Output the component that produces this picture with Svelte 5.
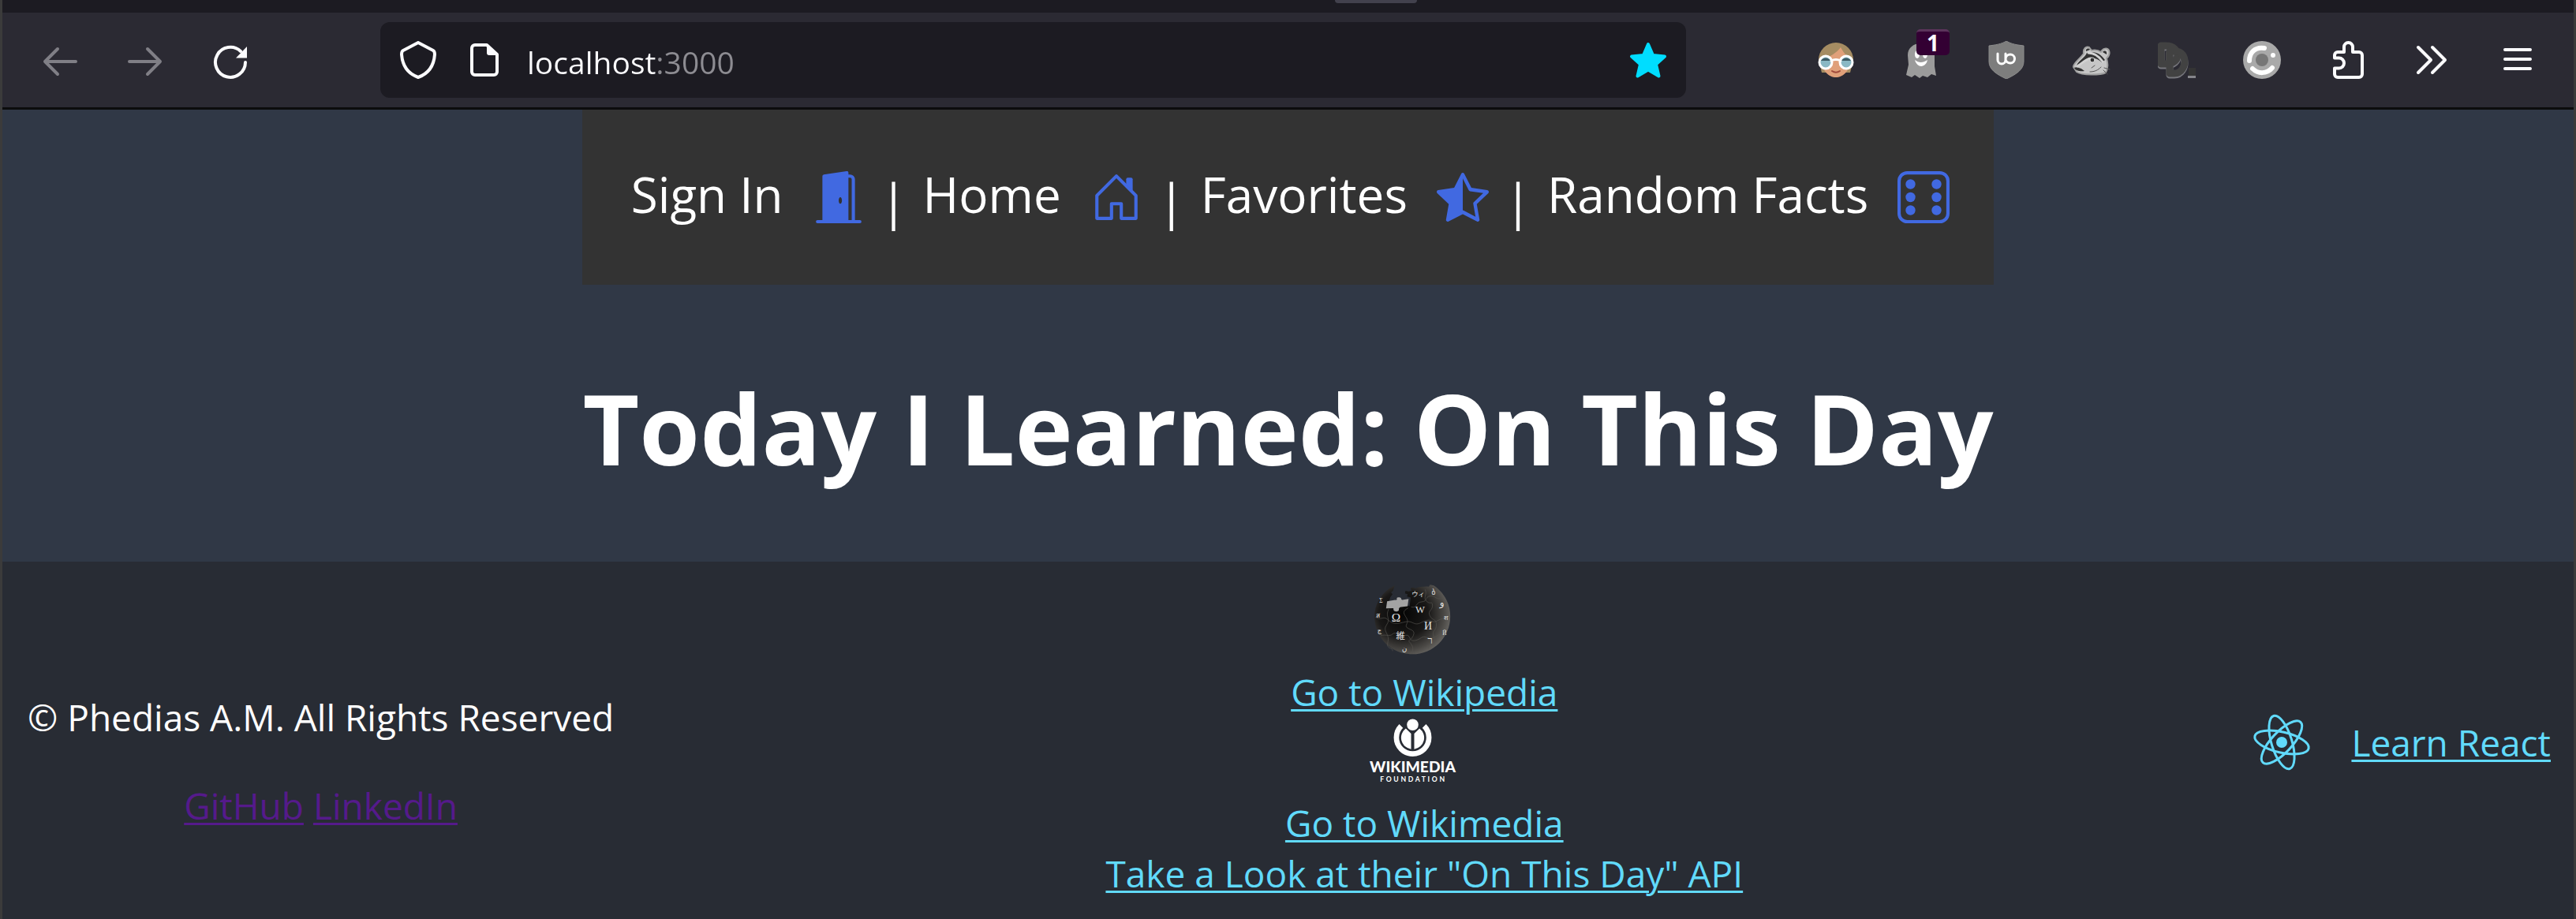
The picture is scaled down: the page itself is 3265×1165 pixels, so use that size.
<script>
  let address = $state('localhost:3000');
</script>

<div class="window">
  <div class="tabs"><span class="tab-edge"></span></div>

  <header class="toolbar">
    <div class="group">
      <button class="tool dim" aria-label="Back" disabled>
        <svg viewBox="0 0 48 48"><path d="M44 26H5M21 10L5 26l16 16" /></svg>
      </button>
      <button class="tool dim" aria-label="Forward" disabled>
        <svg viewBox="0 0 48 48"><path d="M4 26h39M27 10l16 16-16 16" /></svg>
      </button>
      <button class="tool" aria-label="Reload">
        <svg viewBox="0 0 48 48"><path d="M43 27a19 19 0 1 1-6-14" /><path class="solid" d="M45 7v14.500H31z" /></svg>
      </button>
    </div>

    <div class="address">
      <button class="tool" aria-label="Tracking protection">
        <svg viewBox="0 0 48 48"><path d="M24 2L43 12c2 1 2 3 2 5-1 14-7 24-21 29C10 41 4 31 3 17c0-2 0-4 2-5z" /></svg>
      </button>
      <button class="tool page" aria-label="Site information">
        <svg viewBox="0 0 48 48"><path d="M12 5h15l13 12v22a4 4 0 0 1-4 4H12a4 4 0 0 1-4-4V9a4 4 0 0 1 4-4z" /><path class="solid" d="M27 4l14 14H30a3 3 0 0 1-3-3z" /></svg>
      </button>
      <input type="text" aria-label="Address" bind:value={address} />
      <button class="tool" aria-label="Bookmarked">
        <svg viewBox="0 0 48 48"><path class="bookmark" d="M24 4l6 14 15 1.500-11 10 3.500 15L24 36.500 10.500 44.500l3.500-15L3 19.500 18 18z" /></svg>
      </button>
    </div>

    <div class="group">
      <button class="tool" aria-label="Profile helper">
        <svg viewBox="0 0 48 48">
          <path fill="#a58c62" stroke="none" d="M2 24a22 22 0 0 1 44 0l-4 16H6z" />
          <path fill="#e0a07a" stroke="none" d="M6 24c10-4 19-9 24-16 4 8 10 13 12 16 0 14-9 22-18 22S6 38 6 24z" />
          <g fill="#8ab8c4" stroke="#fff" stroke-width="3"><circle cx="11" cy="27" r="8" /><circle cx="37" cy="27" r="8" /></g>
          <path stroke="none" fill="#3c5a64" d="M5 25a7 7 0 0 1 12 0zM31 25a7 7 0 0 1 12 0z" />
          <path stroke="#fff" stroke-width="3" d="M18 25c4-2 8-2 12 0" />
          <path stroke="#a04a3c" stroke-width="2" d="M19 38c3 2 7 2 10 0" />
        </svg>
      </button>
      <button class="tool" aria-label="Tracker blocker, 1 found">
        <svg viewBox="0 0 48 48">
          <path fill="#9b9b9b" stroke="none" d="M7 18C7 9 14 3 24 3s17 6 17 15v14l2 12-6-2-5 4-6-2-4 3-6-4-4 3-7-3 3-13z" />
          <g fill="#fff" stroke="none"><ellipse cx="19" cy="17" rx="3" ry="5" /><ellipse cx="29" cy="17" rx="3" ry="5" /><path d="M16 24c5 4 10 4 16 0-2 10-13 11-16 0z" /></g>
        </svg>
        <span class="badge">1</span>
      </button>
      <button class="tool" aria-label="Content blocker">
        <svg viewBox="0 0 48 48">
          <path fill="#7d7d7d" stroke="#8d8d8d" stroke-width="1" d="M24 0c6 4 14 5 22 6v20c0 10-9 16-22 22C11 42 2 36 2 26V6c8-1 16-2 22-6z" />
          <path stroke="#fff" stroke-width="3" d="M13 16v8a5 5 0 0 0 10 0v-8M23 23c0-4 3-6 6-6a5.500 5.500 0 0 1 0 11c-3 0-6-2-6-5z" />
        </svg>
      </button>
      <button class="tool" aria-label="Privacy guard">
        <svg viewBox="0 0 48 48">
          <path fill="#c6c6c6" stroke="#a0a0a0" stroke-width="2" d="M1 33c-1-4 6-8 13-17-1-6 3-10 7-8l3 4c5-1 9 0 12 2 2-5 8-6 10-2 2 5-1 8-3 10 2 7 2 13-1 18-6 3-30 4-37-1z" />
          <g fill="#333" stroke="none"><path d="M18 15c9-3 17 0 23 9l-4 3C30 21 23 20 15 25L5 31c3-7 10-9 13-16z" /><path d="M17 13c-1-3 3-5 5-2zM38 14c3-3 6-1 5 3zM2 34c3-2 6 0 9 1l4 3c-5 1-11 0-13-4z" /></g>
          <path stroke="#d2d2d2" stroke-width="3" d="M20 15c8 0 13 4 18 11M6 32c7-4 10-9 17-10" />
          <circle cx="25" cy="24" r="3" fill="#333" stroke="#ddd" stroke-width="1" />
          <path stroke="#555" stroke-width="1" d="M40 34l7 2M39 37l5 5M24 34l4-3M22 39c6 0 10-2 14-6" />
        </svg>
      </button>
      <button class="tool" aria-label="Reader extension">
        <svg viewBox="0 0 48 48">
          <g stroke="#77777d" stroke-width="9" stroke-linecap="butt"><path d="M4 8h6c11 0 15 7 15 12s-4 11-15 11H4z" /><path d="M15 15h7c9 0 12 7 12 13s-4 15-13 15h-6z" /></g>
          <path stroke="#424242" stroke-width="9" stroke-linecap="butt" d="M4 6h6c11 0 15 7 15 12s-4 11-15 11H4z" />
          <path stroke="#424242" stroke-width="9" stroke-linecap="butt" d="M15 13h7c9 0 12 7 12 13s-4 15-13 15h-6z" />
          <path stroke="none" fill="#343434" d="M39 34h9v10h-9z" /><path stroke="none" fill="#85858b" d="M38 44h10v3H38z" />
        </svg>
      </button>
      <button class="tool" aria-label="Color picker">
        <svg viewBox="0 0 48 48">
          <circle cx="24" cy="24" r="24" fill="#a9a9a9" stroke="none" /><circle cx="24" cy="24" r="8" fill="#777" stroke="none" />
          <g stroke="#fff" stroke-width="6"><path d="M27 9C15 7 8 15 8 25M12 35c7 7 18 7 25-1" /></g><circle cx="38" cy="18" r="3" fill="#fff" stroke="none" />
        </svg>
      </button>
      <button class="tool" aria-label="Extensions">
        <svg viewBox="0 0 48 48"><path d="M8 18a4 4 0 0 1 4-4h8V7.500a5.500 5.500 0 0 1 11 0V14h8a4 4 0 0 1 4 4v24a4 4 0 0 1-4 4H12a4 4 0 0 1-4-4v-7.500h5.500a6.500 6.500 0 0 0 0-13H8z" /></svg>
      </button>
      <button class="tool" aria-label="More tools">
        <svg viewBox="0 0 48 48"><path d="M6 8l16 16L6 40M24 8l16 16-16 16" /></svg>
      </button>
      <button class="tool" aria-label="Application menu">
        <svg viewBox="0 0 48 48"><path d="M8 11h32M8 23h32M8 35h32" /></svg>
      </button>
    </div>
  </header>

  <main>
    <nav>
      <a href="#signin"><span class="label">Sign In</span>
        <svg viewBox="0 0 16 16"><path d="M1.500 15a.5.5 0 0 0 0 1h13a.5.5 0 0 0 0-1H13V2.500A1.500 1.500 0 0 0 11.500 1H11V.5a.5.5 0 0 0-.57-.495l-7 1A.5.5 0 0 0 3 1.500V15H1.500zM11 2h.5a.5.5 0 0 1 .5.5V15h-1V2zm-2.500 8c-.276 0-.5-.448-.5-1s.224-1 .5-1 .5.448.5 1-.224 1-.5 1z" /></svg>
      </a>
      <span class="pipe">|</span>
      <a href="#home"><span class="label">Home</span>
        <svg viewBox="0 0 16 16"><path d="M7.646 1.146a.5.5 0 0 1 .708 0l6 6a.5.5 0 0 1 .146.354v7a.5.5 0 0 1-.5.5H9.500a.5.5 0 0 1-.5-.5v-4H7v4a.5.5 0 0 1-.5.5H2a.5.5 0 0 1-.5-.5v-7a.5.5 0 0 1 .146-.354l6-6zM2.500 7.707V14H6v-4a.5.5 0 0 1 .5-.5h3a.5.5 0 0 1 .5.5v4h3.500V7.707L8 2.207l-5.500 5.500z" fill-rule="evenodd" /><path d="M13 2.500V6l-2-2V2.500a.5.5 0 0 1 .5-.5h1a.5.5 0 0 1 .5.5z" /></svg>
      </a>
      <span class="pipe">|</span>
      <a href="#favorites"><span class="label">Favorites</span>
        <svg viewBox="0 0 16 16"><path d="M5.354 5.119 7.538.792A.516.516 0 0 1 8 .5c.183 0 .366.097.465.292l2.184 4.327 4.898.696A.537.537 0 0 1 16 6.320a.548.548 0 0 1-.17.445l-3.523 3.356.83 4.730c.078.443-.36.79-.746.592L8 13.187l-4.389 2.256a.52.52 0 0 1-.146.05c-.342.06-.668-.254-.6-.642l.83-4.730L.173 6.765a.55.55 0 0 1-.172-.403.58.58 0 0 1 .085-.302.513.513 0 0 1 .37-.245l4.898-.696zM8 12.027a.5.5 0 0 1 .232.056l3.686 1.894-.694-3.957a.565.565 0 0 1 .162-.505l2.907-2.770-4.052-.576a.525.525 0 0 1-.393-.288L8.001 2.223 8 2.226v9.800z" /></svg>
      </a>
      <span class="pipe">|</span>
      <a href="#random"><span class="label">Random Facts</span>
        <svg viewBox="0 0 16 16"><rect x=".5" y=".5" width="15" height="15" rx="2.500" fill="none" stroke="currentColor" />
          {#each [4, 8, 12] as y}<circle cx="4" cy={y} r="1.500" /><circle cx="12" cy={y} r="1.500" />{/each}
        </svg>
      </a>
    </nav>
    <h1>Today I Learned: On This Day</h1>
  </main>

  <footer>
    <div class="legal">
      <p>© Phedias A.M. All Rights Reserved</p>
      <p><a class="visited" href="#github">GitHub</a> <a class="visited" href="#linkedin">LinkedIn</a></p>
    </div>

    <div class="sources">
      <svg class="globe" viewBox="120 60 300 280" role="img" aria-label="Wikipedia globe">
        <defs>
          <radialGradient id="shade" cx="38%" cy="42%" r="66%">
            <stop offset="0" stop-color="#050505" /><stop offset=".5" stop-color="#191817" /><stop offset=".8" stop-color="#484643" /><stop offset="1" stop-color="#6b6965" />
          </radialGradient>
        </defs>
        <path fill="url(#shade)" d="M203 69c-44 22-77 65-77 118 0 81 64 145 144 145s145-64 145-145c0-48-24-91-63-117l-14-3-5 7c-20-1-38 1-54 7 1-5-15-5-15 1l3 7-11 3-12-2-2 10 10 3-2 9 14 4-4 32-82-6 8-27 9-12-6-7 8-7z" />
        <path fill="#a3a3a3" d="M174 130l31-5c4 2 8-1 6-5-3-7 18-7 17 0-1 5 4 5 8 4l20-3-4 28-25 3c-6 1-9 5-8 10 1 9-17 9-20 2-2-4 2-8-4-8l-25 1z" />
        <g fill="none" stroke="#55534f" stroke-width="2">
          <path d="M129 190c20 15 30-5 45 8s25 20 50 15 30-10 50 0 30-5 50-10 22 12 40 2 30-10 48-16" />
          <path d="M150 261c20-6 34 5 45-6s30 10 50 5 10 25 35 20 25-20 45-12 30 0 60-18" />
          <path d="M266 152c25 5 15-18 40-20s10-18 32-22 15 12 40 10M180 160c-15 30 10 35-8 60s14 35 5 65 20 20 18 35" />
          <path d="M254 156c-40 20 10 35-5 60s40 15 25 45-25 10-10 30 5 25 5 40M319 85c10 20-10 30 6 45s20-5 22 15-20 20-10 40 25 10 25 35-20 20-10 45-20 25-20 45" />
        </g>
        <g class="glyphs">
          <text x="191" y="209" font-size="46">Ω</text><text x="282" y="173" font-size="38">W</text><text x="315" y="237" font-size="42">И</text>
          <text x="208" y="274" font-size="34">維</text><text x="329" y="293" font-size="38">ר</text><text x="268" y="111" font-size="25">ウィ</text>
          <text x="375" y="148" font-size="36">و</text><text x="133" y="193" font-size="26">ส</text><text x="231" y="322" font-size="26">ن</text>
          <text x="344" y="104" font-size="28">ბ</text><text x="144" y="135" font-size="22">Σ</text><text x="390" y="202" font-size="24">श</text><text x="137" y="250" font-size="24">ج</text><text x="385" y="258" font-size="22">Й</text>
        </g>
      </svg>
      <a href="#wikipedia">Go to Wikipedia</a>
      <svg class="wikimedia" viewBox="100 570 340 306" role="img" aria-label="Wikimedia Foundation">
        <circle cx="270" cy="599" r="22" fill="#fff" />
        <path d="M226 604a62 62 0 1 0 88 0" fill="none" stroke="#fff" stroke-width="20" />
        <path d="M244 613l20 20v59a44 44 0 0 1-20-79zM296 613l-20 20v59a44 44 0 0 0 20-79z" fill="#fff" />
        <text class="brand" x="270" y="779">WIKIMEDIA</text>
        <text class="sub" x="273" y="817">FOUNDATION</text>
      </svg>
      <a href="#wikimedia">Go to Wikimedia</a>
      <a href="#api">Take a Look at their "On This Day" API</a>
    </div>

    <div class="react">
      <svg viewBox="-60 -40 120 80" role="img" aria-label="React">
        <g fill="none" stroke="currentColor" stroke-width="3" transform="rotate(13)">
          <ellipse rx="35" ry="13" /><ellipse rx="35" ry="13" transform="rotate(60)" /><ellipse rx="35" ry="13" transform="rotate(120)" />
        </g>
        <circle r="7" fill="currentColor" />
      </svg>
      <a href="#react">Learn React</a>
    </div>
  </footer>
</div>

<style>
  :global(body) { margin: 0; background: #282c34; }
  .window {
    box-sizing: border-box;
    min-height: 100vh;
    display: flex;
    flex-direction: column;
    border: solid #3b3b3b;
    border-width: 0 3px;
    background: #303846;
    color: #fff;
    font-family: "Open Sans", "Noto Sans", sans-serif;
  }
  .tabs { height: 16px; background: #1c1b22; display: flex; justify-content: center; padding-left: 223px; }
  .tab-edge { width: 104px; height: 4px; border-radius: 0 0 8px 8px; background: #42414d; }

  .toolbar {
    display: flex;
    align-items: center;
    gap: 166px;
    height: 120px;
    padding: 0 47px 0 49px;
    background: #2b2a33;
    border-bottom: 3px solid #0c0c0d;
  }
  .group { display: flex; gap: 60px; }
  .tool { position: relative; flex: none; width: 48px; height: 48px; padding: 0; border: 0; background: none; color: #fbfbfe; font: inherit; }
  .tool svg { display: block; width: 48px; height: 48px; fill: none; stroke: currentColor; stroke-width: 4; stroke-linecap: round; stroke-linejoin: round; }
  .tool .solid { fill: currentColor; stroke: none; }
  .tool .bookmark { fill: #00ddff; stroke: #00ddff; }
  .dim { color: #807f86; }
  .badge {
    position: absolute;
    left: 18px;
    top: -15px;
    box-sizing: border-box;
    width: 42px;
    height: 33px;
    border-top: 3px solid #5b345b;
    border-radius: 5px;
    background: #330033;
    font-size: 28px;
    font-weight: 700;
    line-height: 28px;
  }
  .address {
    flex: 1;
    display: flex;
    align-items: center;
    box-sizing: border-box;
    height: 96px;
    padding: 0 24px;
    border-radius: 12px;
    background: #1c1b22;
  }
  .page { margin: 0 30px 0 36px; }
  input {
    flex: 1;
    min-width: 0;
    height: 64px;
    padding: 4px 0 0;
    border: 0;
    outline: 0;
    font: inherit;
    font-size: 39px;
    color: transparent;
    background: linear-gradient(to right, #fbfbfe 163px, #8d8c92 163px);
    background-clip: text;
    -webkit-background-clip: text;
  }

  main { display: flex; flex-direction: column; align-items: center; }
  nav { display: flex; align-items: center; height: 222px; padding: 0 56px 0 62px; background: #333; font-size: 62px; }
  nav a { display: flex; align-items: center; gap: 37px; color: #fff; text-decoration: none; }
  nav svg { width: 66px; height: 66px; fill: currentColor; color: royalblue; }
  .label { padding-bottom: 8px; }
  .pipe { width: 74px; padding-top: 8px; text-align: center; }
  h1 { margin: 97px 0 86px; font-size: 124px; font-weight: 700; line-height: 168px; }

  footer {
    flex: 1;
    display: flex;
    align-items: center;
    justify-content: space-between;
    padding: 27px 29px 26px 32px;
    background: #282c34;
    font-size: 46px;
    line-height: 64px;
  }
  footer a { color: #61dafb; text-decoration-thickness: 3px; text-underline-offset: 4px; }
  .legal { display: flex; flex-direction: column; gap: 48px; padding-top: 52px; text-align: center; }
  .legal p { margin: 0; }
  footer .visited { color: #551a8b; }
  .sources { display: flex; flex-direction: column; align-items: center; }
  .globe { width: 100px; height: 93px; margin: 0 30px 13px 0; }
  .glyphs { fill: #e4e4e4; font-family: "Liberation Serif", "DejaVu Sans", "Noto Sans CJK JP", serif; }
  .wikimedia { width: 113px; height: 102px; margin-right: 30px; }
  .brand, .sub { fill: #fff; text-anchor: middle; font-family: Lato, sans-serif; }
  .brand { font-size: 58px; font-weight: 900; }
  .sub { font-size: 26px; font-weight: 700; letter-spacing: 8px; }
  .react { display: flex; align-items: center; gap: 28px; padding-top: 4px; color: #61dafb; }
  .react svg { width: 120px; height: 80px; }
</style>
